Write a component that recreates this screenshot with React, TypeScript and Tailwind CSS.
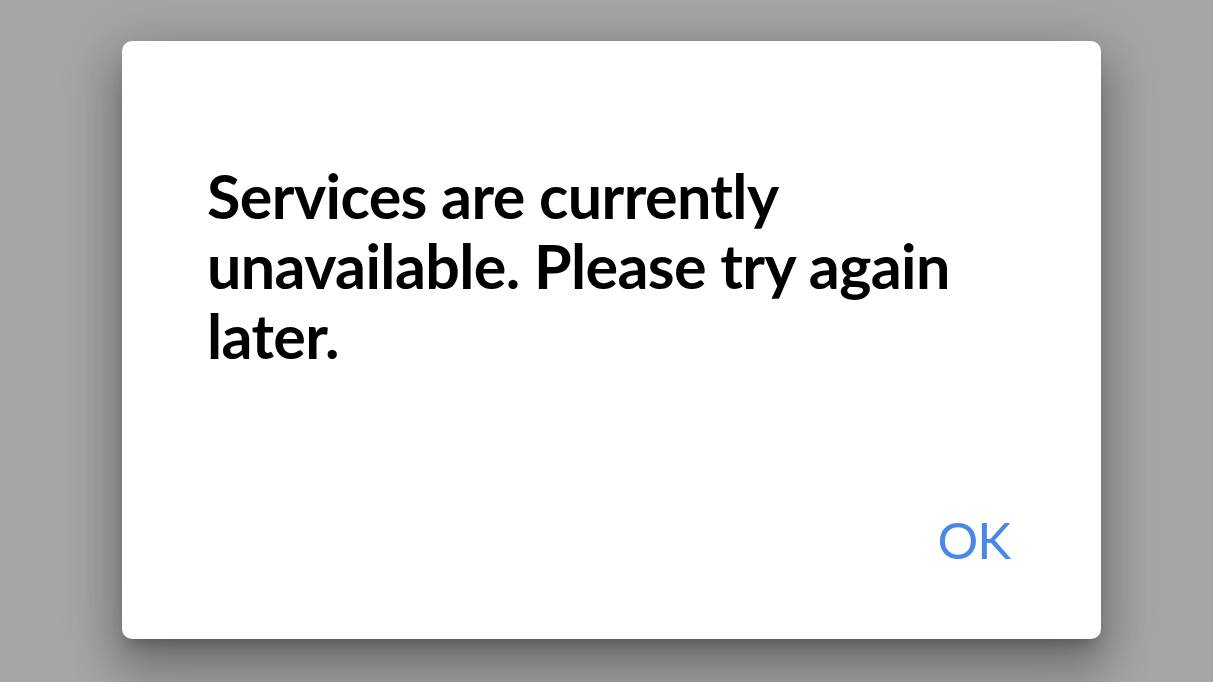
export default function App() {
  return (
    <div className="w-[1213px] h-[682px] bg-[#a6a6a6] flex justify-start items-start pl-[122px] pt-[41px] overflow-hidden" style={{ fontFamily: 'Lato, "Noto Sans", sans-serif' }}>
      <div className="w-[979px] h-[598px] bg-white rounded-[10px] shadow-[0_11px_15px_-7px_rgba(0,0,0,0.25),0_30px_45px_6px_rgba(0,0,0,0.22),0_9px_60px_8px_rgba(0,0,0,0.16)] flex flex-col pl-[85px] pr-[91px] pt-[120px]">
        <p className="text-[61px] leading-[70px] font-bold text-black tracking-[-0.6px]">
          Services are currently
          <br />
          unavailable. Please try again
          <br />
          later.
        </p>
        <div className="flex justify-end mt-[139px]">
          <button className="text-[51px] leading-[60px] font-normal text-[#4a88e8] tracking-[-1px]">OK</button>
        </div>
      </div>
    </div>
  );
}
